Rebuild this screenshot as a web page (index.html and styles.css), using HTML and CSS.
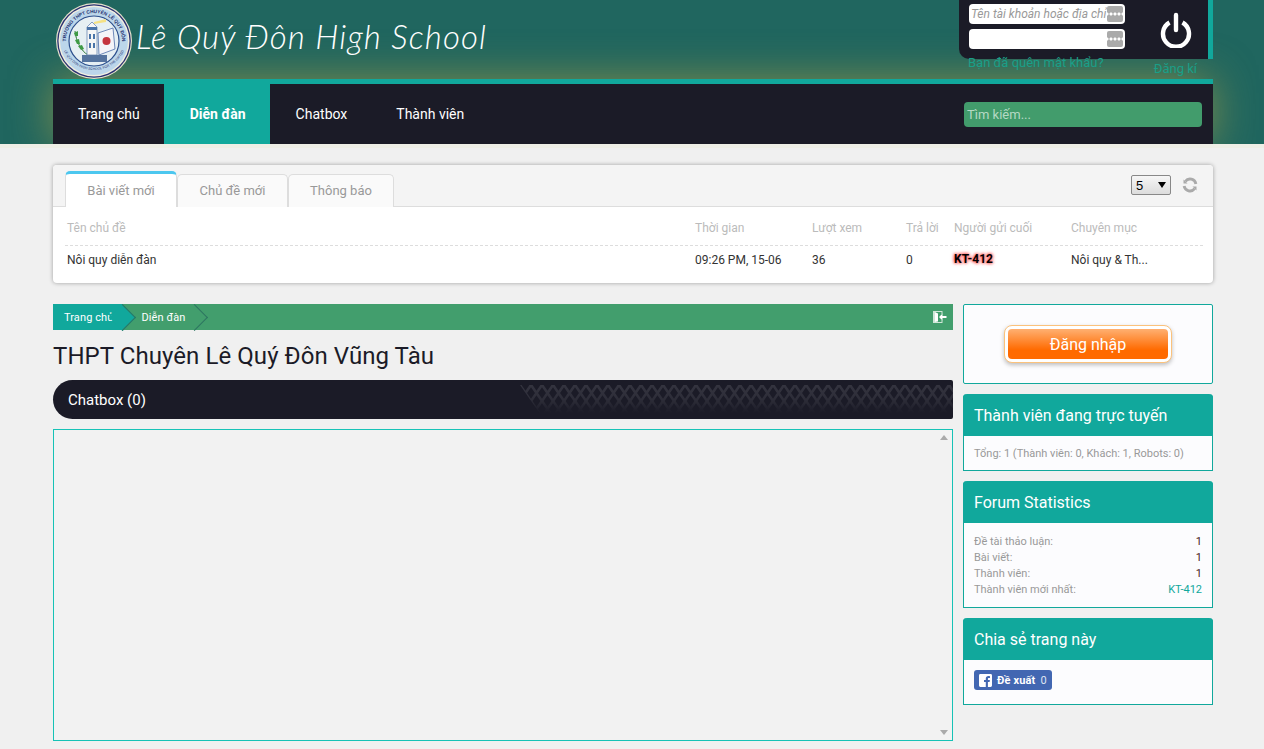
FILE: index.html
```html
<!DOCTYPE html>
<html lang="en">
<head>
    <meta charset="UTF-8">
    <meta name="viewport" content="width=device-width, initial-scale=1.0">
    <title>Lê Quý Đôn High School</title>
    <link rel="stylesheet" href="styles.css">
</head>
<body>

    <header class="site-head">
        <div class="wrap">
            <div class="head-top">
                <a class="brand" href="#">
                    <svg class="logo" viewBox="0 0 76 76" width="76" height="76">
                        <defs>
                            <path id="arcTop" d="M13.750 52A28 28 0 1 1 62.250 52"/>
                            <path id="arcBottom" d="M5 34a33 33 0 0 0 66 0"/>
                        </defs>
                        <circle cx="38" cy="38" r="38" fill="#e6e2cc"/>
                        <circle cx="38" cy="38" r="36.800" fill="#2a3273"/>
                        <circle cx="38" cy="38" r="35.500" fill="#f1eedf"/>
                        <circle cx="38" cy="38" r="34" fill="#bcd6ea"/>
                        <circle cx="38" cy="38" r="25" fill="#e6eff3" stroke="#2c4f8c" stroke-width="1.200"/>
                        <text class="logo-arc"><textPath href="#arcTop" startOffset="50%" text-anchor="middle">TRƯỜNG THPT CHUYÊN LÊ QUÝ ĐÔN</textPath></text>
                        <text class="logo-arc small"><textPath href="#arcBottom" startOffset="50%" text-anchor="middle">LE QUY DON HIGH SCHOOL FOR THE GIFTED</textPath></text>
                        <path d="M19 28c1 10 6 20 13 24" fill="none" stroke="#2f7a35" stroke-width="1"/>
                        <path d="M18 30l4-2 0 5-3 0zM19 37l4-1 1 5-3 0zM22 43l4-1 2 4-3 1z" fill="#3f9a45"/>
                        <path d="M42 30l15-5 2 21-16 6z" fill="#f4f4f8" stroke="#4d6da8" stroke-width=".8"/>
                        <circle cx="50.500" cy="38" r="4" fill="#c4343e"/>
                        <path d="M31 52V24l5-5 5 5v28z" fill="#f6f6f6" stroke="#5878aa" stroke-width=".7"/>
                        <path d="M31 24h10v3H31zM33 31h2v5h-2zM37 31h2v5h-2zM33 40h2v5h-2zM37 40h2v5h-2z" fill="#4a74a8"/>
                        <path d="M38 19l12-3v3l-12 2z" fill="#f5e184"/>
                        <path d="M26 52h25v7H26z" fill="#56749f"/>
                    </svg>
                    <span class="brand-name">Lê Quý Đôn High School</span>
                </a>

                <div class="login-col">
                    <form class="login-panel">
                        <div class="login-fields">
                            <div class="field">
                                <input type="text" placeholder="Tên tài khoản hoặc địa chỉ Email">
                                <span class="field-key"></span>
                            </div>
                            <div class="field">
                                <input type="password">
                                <span class="field-key"></span>
                            </div>
                        </div>
                        <button class="power-btn" type="button" aria-label="Đăng nhập">
                            <svg viewBox="0 0 32 36" width="32" height="36">
                                <path d="M9.500 10.500a13 13 0 1 0 13 0" fill="none" stroke="#fff" stroke-width="4.400"/>
                                <path d="M16 3v15" fill="none" stroke="#fff" stroke-width="4.400" stroke-linecap="round"/>
                            </svg>
                        </button>
                    </form>
                    <div class="login-links">
                        <a href="#">Bạn đã quên mật khẩu?</a>
                        <a class="register" href="#">Đăng kí</a>
                    </div>
                </div>
            </div>

            <nav class="main-nav">
                <a href="#">Trang chủ</a>
                <a class="active" href="#">Diễn đàn</a>
                <a href="#">Chatbox</a>
                <a href="#">Thành viên</a>
                <input class="nav-search" type="text" placeholder="Tìm kiếm...">
            </nav>
        </div>
    </header>

    <main class="wrap">
        <section class="recent">
            <div class="recent-tabs">
                <a class="tab active" href="#">Bài viết mới</a>
                <a class="tab" href="#">Chủ đề mới</a>
                <a class="tab" href="#">Thông báo</a>
                <div class="recent-tools">
                    <div class="per-page">
                        <select>
                            <option>5</option>
                            <option>10</option>
                        </select>
                    </div>
                    <svg class="refresh" viewBox="0 0 16 16" width="16" height="16">
                        <path d="M3.300 4.300A6 6 0 0 1 13.900 7" fill="none" stroke="#aaa" stroke-width="2.800"/>
                        <path d="M12.700 11.700A6 6 0 0 1 2.100 9" fill="none" stroke="#aaa" stroke-width="2.800"/>
                        <path d="M1.500 2.500l4 4h-4zM14.500 13.500l-4-4h4z" fill="#aaa"/>
                    </svg>
                </div>
            </div>
            <div class="recent-table">
                <div class="recent-row head">
                    <span>Tên chủ đề</span>
                    <span>Thời gian</span>
                    <span>Lượt xem</span>
                    <span>Trả lời</span>
                    <span>Người gửi cuối</span>
                    <span>Chuyên mục</span>
                </div>
                <div class="recent-row">
                    <span>Nôi quy diễn đàn</span>
                    <span>09:26 PM, 15-06</span>
                    <span>36</span>
                    <span>0</span>
                    <span class="user-glow">KT-412</span>
                    <span>Nôi quy &amp; Th...</span>
                </div>
            </div>
        </section>

        <div class="columns">
            <div class="col-main">
                <div class="crumbs">
                    <a class="crumb first" href="#">Trang chủ</a>
                    <a class="crumb" href="#">Diễn đàn</a>
                    <svg class="crumb-exit" viewBox="0 0 14 14" width="14" height="14">
                        <path d="M0 1h9.500v3h-1V2H2v10h6.500v-2h1v3H0z" fill="#cfe6d8"/>
                        <path d="M2 2l3 1.500v8L2 12z" fill="#fff"/>
                        <path d="M13.500 6H9.500V3.500L6 7l3.500 3.500V8h4z" fill="#fff"/>
                    </svg>
                </div>

                <h1 class="page-title">THPT Chuyên Lê Quý Đôn Vũng Tàu</h1>

                <div class="chat-bar">
                    <span>Chatbox (0)</span>
                    <svg class="chat-pattern" width="433" height="39">
                        <defs>
                            <pattern id="lattice" width="11" height="16" patternUnits="userSpaceOnUse" y="5">
                                <path d="M0 0L11 16M11 0L0 16" stroke="#34343f" stroke-width="2.600" fill="none"/>
                            </pattern>
                            <linearGradient id="fade" x1="0" y1="0" x2="0" y2="1">
                                <stop offset="0.15" stop-color="#fff"/>
                                <stop offset="0.5" stop-color="#bbb"/>
                                <stop offset="0.85" stop-color="#000"/>
                            </linearGradient>
                            <mask id="fadeMask"><rect width="433" height="39" fill="url(#fade)"/></mask>
                        </defs>
                        <polygon points="0,5 433,5 433,34 20,34" fill="url(#lattice)" mask="url(#fadeMask)"/>
                    </svg>
                </div>

                <div class="chat-box">
                    <div class="chat-scroll">
                        <span class="arrow up"></span>
                        <span class="arrow down"></span>
                    </div>
                </div>
            </div>

            <aside class="col-side">
                <div class="login-box">
                    <a class="login-btn" href="#"><span>Đăng nhập</span></a>
                </div>

                <div class="side-panel">
                    <h3>Thành viên đang trực tuyến</h3>
                    <div class="side-body">
                        <p>Tổng: 1 (Thành viên: 0, Khách: 1, Robots: 0)</p>
                    </div>
                </div>

                <div class="side-panel">
                    <h3>Forum Statistics</h3>
                    <div class="side-body">
                        <div class="stat"><span>Đề tài thảo luận:</span><b>1</b></div>
                        <div class="stat"><span>Bài viết:</span><b>1</b></div>
                        <div class="stat"><span>Thành viên:</span><b>1</b></div>
                        <div class="stat"><span>Thành viên mới nhất:</span><a href="#">KT-412</a></div>
                    </div>
                </div>

                <div class="side-panel">
                    <h3>Chia sẻ trang này</h3>
                    <div class="side-body share">
                        <a class="fb-btn" href="#">
                            <svg viewBox="0 0 14 14" width="13" height="13">
                                <path d="M1.500 0h11A1.500 1.500 0 0 1 14 1.500v11a1.500 1.500 0 0 1-1.500 1.500H9.600V8.600h1.800l.3-2.100H9.600V5.200c0-.6.2-1 1-1h1.200V2.300c-.2 0-.9-.1-1.700-.1-1.700 0-2.800 1-2.800 2.900v1.400H5.400v2.100h1.900V14H1.500A1.500 1.500 0 0 1 0 12.500v-11A1.500 1.500 0 0 1 1.500 0z" fill="#fff"/>
                            </svg>
                            <b>Đề xuất</b>
                            <span>0</span>
                        </a>
                    </div>
                </div>
            </aside>
        </div>
    </main>

</body>
</html>
```

FILE: styles.css
```css
* { box-sizing: border-box; }
body { margin: 0; background: #f0f0f0; font-family: Roboto, Arial, sans-serif; font-size: 12px; color: #333; }
a { text-decoration: none; color: inherit; }
.wrap { width: 1160px; margin-left: 53px; }

/* header */
.site-head {
    height: 148px; overflow: hidden;
    background: #20665f;
    border-bottom: 4px solid #eeeee6;
}
.head-top { display: flex; justify-content: space-between; height: 79px; }
.brand { display: flex; align-items: flex-start; padding: 3px 0 0 3px; }
.logo { flex: none; }
.logo-arc { font-family: "Liberation Sans", Arial, sans-serif; font-size: 4.800px; font-weight: 700; fill: #23306e; }
.logo-arc.small { font-size: 3.400px; font-weight: 400; }
.brand-name {
    margin: 13px 0 0 4px;
    font-family: Lato, sans-serif; font-style: italic; font-weight: 300;
    font-size: 33px; line-height: 40px; letter-spacing: 1.100px;
    color: #fff;
}
.login-col { width: 254px; position: relative; z-index: 1; }
.login-panel {
    display: flex; height: 59px;
    padding: 4px 0 0 10px;
    background: #1b1b27;
    border-right: 5px solid #11a89c;
    border-bottom-left-radius: 10px;
}
.login-fields { width: 156px; }
.field { position: relative; height: 20px; margin-bottom: 5px; }
.field input {
    width: 100%; height: 20px; padding: 0 2px;
    border: 0; border-radius: 4px; background: #fff;
    font-family: Roboto, Arial, sans-serif; font-size: 12px; font-style: italic;
}
.field input::placeholder { color: #999; }
.field-key {
    position: absolute; top: 2px; right: 2px;
    width: 16px; height: 16px;
    border-radius: 2px;
    background: radial-gradient(circle, #fff 1.300px, transparent 1.800px) 2px 6px / 4px 4px repeat-x #aaa;
}
.power-btn {
    display: block; margin: 8px 0 0 35px; padding: 0;
    width: 32px; height: 36px; background: none; border: 0;
}
.login-links { display: flex; justify-content: space-between; padding: 0 16px 0 9px; font-size: 13px; line-height: 15px; color: #1a9f88; }
.login-links a { margin-top: -4px; }
.login-links .register { margin-top: 2px; }

.main-nav {
    display: flex; align-items: center; height: 65px;
    background: #1b1b27;
    border-top: 5px solid #11a89c;
    box-shadow: 0 0 42px rgba(150, 150, 70, .8);
}
.main-nav a {
    padding: 0 25px; height: 60px;
    color: #fff; font-size: 14px; line-height: 60px;
}
.main-nav a:first-child { padding-right: 24px; }
.main-nav a.active { padding: 0 24px 0 26px; background: #11a89c; font-weight: 700; }
.main-nav a:nth-child(3) { padding: 0 24px 0 26px; }
.nav-search {
    width: 238px; height: 25px; margin: 0 11px 0 auto; padding: 0 3px;
    border: 0; border-radius: 4px; background: #429c6c;
    font-family: Roboto, Arial, sans-serif; font-size: 13px; color: #fff;
}
.nav-search::placeholder { color: #b5d9c4; }

/* recent topics */
.recent {
    margin-top: 17px; height: 118px;
    background: #fff; border-radius: 4px;
    box-shadow: 0 0 4px rgba(0, 0, 0, .35);
    overflow: hidden;
}
.recent-tabs {
    display: flex; align-items: flex-end;
    height: 42px; padding-left: 12px;
    background: #f4f4f4;
    border-bottom: 1px solid #ddd;
}
.tab {
    width: 111px; height: 33px; margin-bottom: -1px;
    background: #fafafa;
    border: 1px solid #ddd; border-bottom: 0;
    border-radius: 5px 5px 0 0;
    color: #999; font-size: 13px; line-height: 31px; text-align: center;
}
.tab:nth-child(3) { width: 106px; }
.tab.active {
    width: 112px; height: 36px; background: #fff;
    border-top: 3px solid #4cc7ef;
    line-height: 33px;
}
.recent-tools { display: flex; align-items: center; gap: 11px; margin: 0 15px 11px auto; }
.per-page { position: relative; width: 40px; height: 20px; }
.per-page select {
    appearance: none; display: block;
    width: 40px; height: 20px; padding: 0 0 0 4px;
    border: 1px solid #888; border-radius: 2px;
    background: linear-gradient(#f6f6f6, #dcdcdc);
    font-family: "Liberation Sans", Arial, sans-serif; font-size: 13px; color: #000;
}
.per-page::after {
    content: ""; position: absolute; top: 7px; right: 5px;
    border: 4px solid transparent; border-top: 6px solid #000; border-bottom: 0;
}
.recent-table { padding: 0 10px 0 12px; }
.recent-row {
    display: grid; grid-template-columns: 628px 117px 94px 48px 117px 1fr;
    height: 31px; padding-left: 2px;
    line-height: 28px; white-space: nowrap;
}
.recent-row.head { height: 39px; padding-top: 5px; border-bottom: 1px dashed #ddd; color: #bbb; }
.recent-row.head span { line-height: 32px; }
.user-glow { font-weight: 700; color: #000; line-height: 26px; text-shadow: 0 0 3px #ff5a5a, 0 0 3px #ff5a5a, 0 0 4px #ff7a7a; }

/* main columns */
.columns { display: flex; gap: 10px; margin-top: 21px; }
.col-main { width: 900px; }
.col-side { width: 250px; }

.crumbs { display: flex; align-items: center; height: 26px; background: #429e6d; color: #fff; font-size: 11px; letter-spacing: .1px; }
.crumb { position: relative; height: 26px; padding: 0 10px 0 18px; line-height: 27px; }
.crumb.first { padding: 0 10px; background: #11a89c; }
.crumb.first { padding-left: 11px; margin-left: 0; }
.crumb::after {
    content: ""; position: absolute; top: 4px; right: -9px; z-index: 1;
    width: 18px; height: 18px;
    background: inherit;
    border-top: 1px solid #2c7560; border-right: 1px solid #2c7560;
    transform: rotate(45deg);
}
.crumb-exit { margin: 0 6px 0 auto; }

.page-title { margin: 0; height: 50px; font-size: 24px; font-weight: 400; line-height: 52px; letter-spacing: .07px; color: #1b1b27; }

.chat-bar {
    display: flex; justify-content: space-between; align-items: center;
    height: 39px; padding-left: 15px;
    background: #1b1b27;
    border-radius: 20px 2px 2px 20px;
    color: #fff; font-size: 15px;
}
.chat-pattern { display: block; }
.chat-box {
    display: flex; justify-content: flex-end;
    height: 312px; margin-top: 10px;
    background: #f2f2f2;
    border: 1px solid #16c2b6;
}
.chat-scroll { display: flex; flex-direction: column; justify-content: space-between; width: 16px; padding: 5px 0; }
.arrow { display: block; width: 0; margin: 0 auto; border: 4px solid transparent; }
.arrow.up { border-top: 0; border-bottom: 5px solid #aaa; }
.arrow.down { border-bottom: 0; border-top: 5px solid #aaa; }

/* sidebar */
.login-box {
    display: flex; align-items: center; justify-content: center;
    height: 80px;
    background: #fcfcfe;
    border: 1px solid #11a89c; border-radius: 2px;
}
.login-btn {
    display: block; width: 168px; height: 38px; padding: 3px;
    background: #fff;
    border: 1px solid #fbc27c; border-radius: 8px;
    box-shadow: 0 2px 4px rgba(0, 0, 0, .25);
}
.login-btn span {
    display: block; height: 30px;
    border-radius: 4px;
    background: linear-gradient(#ffb071, #ff6a00 70%);
    color: #fff; font-size: 16px; line-height: 32px; text-align: center;
}
.side-panel { margin-top: 10px; background: #fcfcfe; border: 1px solid #11a89c; border-top: 0; border-radius: 4px 4px 0 0; }
.side-panel h3 {
    margin: 0 -1px; height: 42px; padding: 0 11px;
    background: #11a89c; border-radius: 4px 4px 0 0;
    color: #fff; font-size: 16px; font-weight: 400; line-height: 43px;
}
.side-body { padding: 11px 10px 9px; font-size: 11px; color: #999; }
.side-body p { margin: 0; line-height: 14px; }
.stat { display: flex; justify-content: space-between; line-height: 16px; }
.stat b { font-weight: 400; color: #4a1a1a; }
.stat a { color: #11a89c; }
.share { height: 44px; padding-top: 10px; }
.fb-btn {
    display: inline-flex; align-items: center; gap: 5px;
    height: 20px; padding: 0 5px;
    background: #4267b2; border-radius: 3px;
    color: #fff; font-size: 11px; letter-spacing: .15px;
}
.fb-btn b { font-weight: 700; }
.fb-btn span { color: #dfe6f3; }
```
